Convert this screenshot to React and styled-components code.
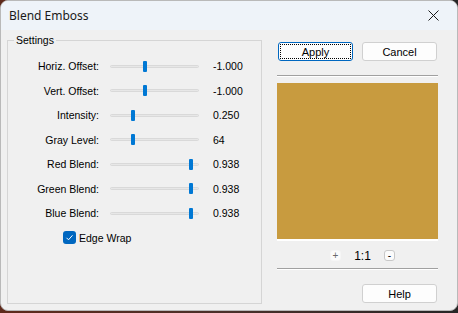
import React from "react";
import styled, { createGlobalStyle } from "styled-components";

const GlobalStyle = createGlobalStyle`
  html, body {
    margin: 0;
    padding: 0;
  }
  body {
    width: 458px;
    height: 313px;
    overflow: hidden;
    background: linear-gradient(90deg, #5e2a1b 0%, #4a302a 50%, #262626 100%);
    font-family: "Liberation Sans", Arial, sans-serif;
  }
`;

const Window = styled.div`
  width: 458px;
  height: 311px;
  box-sizing: border-box;
  border: 1px solid #b9b9b9;
  border-radius: 8px;
  overflow: hidden;
  background: #f0f0f0;
  display: flex;
  flex-direction: column;
`;

const TitleBar = styled.div`
  height: 29px;
  flex: none;
  background: #eef3f9;
  display: flex;
  align-items: center;
  justify-content: space-between;
  padding-left: 8px;
  font-family: "Noto Sans", "Open Sans", sans-serif;
  font-size: 12px;
  color: #1a1a1a;
`;

const CloseButton = styled.div`
  width: 46px;
  height: 29px;
  display: flex;
  align-items: center;
  justify-content: center;
  margin-right: 1px;
`;

const Content = styled.div`
  flex: 1;
  display: flex;
  padding: 4px 0 0 6px;
  font-size: 10.5px;
  color: #000;
`;

const GroupBox = styled.fieldset`
  width: 255px;
  height: 270px;
  box-sizing: border-box;
  margin: 0;
  padding: 7px 0 0 6px;
  border: 1px solid #d5d5d5;
  border-radius: 0;
  flex: none;
`;

const Legend = styled.legend`
  padding: 0 2px;
  font-size: 10.5px;
  line-height: 13px;
`;

const Row = styled.div`
  display: grid;
  grid-template-columns: 85px 89px 1fr;
  column-gap: 11px;
  align-items: center;
  height: 24.5px;
`;

const Label = styled.span`
  text-align: right;
  white-space: nowrap;
`;

const Value = styled.span`
  padding-left: 3px;
`;

const Track = styled.div`
  position: relative;
  height: 3px;
  box-sizing: border-box;
  background: #e7e7e7;
  border: 1px solid #d9d9d9;
  border-radius: 2px;
`;

const Thumb = styled.div`
  position: absolute;
  top: -5px;
  width: 4px;
  height: 11px;
  border-radius: 1px;
  background: #0078d4;
`;

const CheckRow = styled.label`
  display: flex;
  align-items: center;
  gap: 3px;
  height: 24.5px;
  padding-left: 49px;
`;

const CheckBox = styled.span`
  width: 13px;
  height: 13px;
  border-radius: 3px;
  background: #0067c0;
  display: flex;
  align-items: center;
  justify-content: center;
`;

const Side = styled.div`
  width: 161px;
  margin-left: 15px;
  padding-top: 8px;
  display: flex;
  flex-direction: column;
`;

const ButtonRow = styled.div`
  display: flex;
  gap: 9px;
  padding-left: 1px;
`;

const Button = styled.button`
  width: 75px;
  height: 19px;
  box-sizing: border-box;
  padding: 0;
  font-family: "Liberation Sans", Arial, sans-serif;
  font-size: 11px;
  color: #000;
  background: #fdfdfd;
  border: 1px solid ${(p) => (p.$focused ? "#0067c0" : "#d0d0d0")};
  border-radius: 3px;
  position: relative;
  display: flex;
  align-items: center;
  justify-content: center;

  ${(p) =>
    p.$focused &&
    `
    &::after {
      content: "";
      position: absolute;
      inset: 1px;
      border: 1px dotted #000;
    }
  `}
`;

const Separator = styled.div`
  height: 1px;
  background: #a0a0a0;
  border-bottom: 1px solid #ffffff;
  margin-top: ${(p) => p.$top}px;
`;

const Preview = styled.div`
  height: 156px;
  margin-top: 6px;
  background: #c89b3f;
  border-bottom: 2px solid #ffffff;
`;

const ZoomRow = styled.div`
  display: flex;
  align-items: center;
  height: 11px;
  margin-top: 9px;
  padding-left: 53px;
`;

const ZoomButton = styled.span`
  width: 11px;
  height: 11px;
  box-sizing: border-box;
  display: flex;
  align-items: center;
  justify-content: center;
  font-size: 10px;
  line-height: 1;
  color: ${(p) => (p.$flat ? "#6a6a6a" : "#000")};
  background: #fbfbfb;
  border: 1px solid ${(p) => (p.$flat ? "#f6f6f6" : "#c8c8c8")};
  border-radius: 3px;
`;

const ZoomText = styled.span`
  width: 43px;
  text-align: center;
  font-size: 12px;
`;

const HelpRow = styled.div`
  display: flex;
  justify-content: flex-end;
  margin-top: 14px;
  padding-right: 1px;
`;

const settings = [
  { label: "Horiz. Offset:", value: "-1.000", pos: 33 },
  { label: "Vert. Offset:", value: "-1.000", pos: 33 },
  { label: "Intensity:", value: "0.250", pos: 21 },
  { label: "Gray Level:", value: "64", pos: 21 },
  { label: "Red Blend:", value: "0.938", pos: 79 },
  { label: "Green Blend:", value: "0.938", pos: 79 },
  { label: "Blue Blend:", value: "0.938", pos: 79 },
];

function Slider({ pos }) {
  return (
    <Track>
      <Thumb style={{ left: pos - 1 }} />
    </Track>
  );
}

export default function App() {
  return (
    <>
      <GlobalStyle />
      <Window>
        <TitleBar>
          <span>Blend Emboss</span>
          <CloseButton>
            <svg width="11" height="11" viewBox="0 0 11 11">
              <path d="M0.5 0.5 L10.5 10.5 M10.5 0.5 L0.5 10.5" stroke="#1a1a1a" strokeWidth="1" />
            </svg>
          </CloseButton>
        </TitleBar>
        <Content>
          <GroupBox>
            <Legend>Settings</Legend>
            {settings.map((s) => (
              <Row key={s.label}>
                <Label>{s.label}</Label>
                <Slider pos={s.pos} />
                <Value>{s.value}</Value>
              </Row>
            ))}
            <CheckRow>
              <CheckBox>
                <svg width="9" height="9" viewBox="0 0 9 9">
                  <path d="M1.5 4.8 L3.5 6.8 L7.5 2.3" fill="none" stroke="#fff" strokeWidth="1" />
                </svg>
              </CheckBox>
              <span>Edge Wrap</span>
            </CheckRow>
          </GroupBox>
          <Side>
            <ButtonRow>
              <Button $focused>Apply</Button>
              <Button>Cancel</Button>
            </ButtonRow>
            <Separator $top={14} />
            <Preview />
            <ZoomRow>
              <ZoomButton $flat>+</ZoomButton>
              <ZoomText>1:1</ZoomText>
              <ZoomButton>-</ZoomButton>
            </ZoomRow>
            <Separator $top={7} />
            <HelpRow>
              <Button>Help</Button>
            </HelpRow>
          </Side>
        </Content>
      </Window>
    </>
  );
}
